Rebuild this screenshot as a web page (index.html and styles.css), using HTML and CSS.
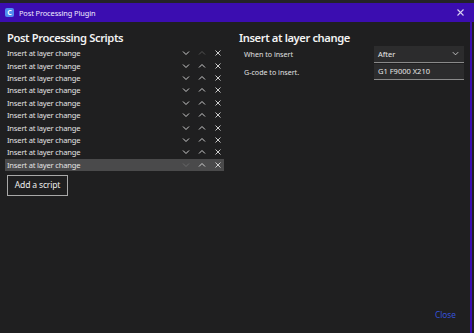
FILE: index.html
```html
<!DOCTYPE html>
<html>
<head>
<meta charset="utf-8">
<link rel="stylesheet" href="styles.css">
</head>
<body>
<div class="window">
  <div class="topstrip"></div>
  <div class="titlebar">
    <span class="appicon">C</span>
    <span class="title">Post Processing Plugin</span>
    <svg class="winclose" width="9" height="9" viewBox="0 0 9 9"><path d="M1.5 1.5L7.5 7.5M7.5 1.5L1.5 7.5" stroke="#d8d0f0" stroke-width="1.1"/></svg>
  </div>
  <div class="body">
    <div class="content">
      <div class="left">
        <h1 class="heading">Post Processing Scripts</h1>
        <div class="list">
          <div class="row"><span class="name">Insert at layer change</span><span class="icons"><svg class="ic" viewBox="0 0 10 10"><path d="M2 3.5L5 6.5L8 3.5"/></svg><svg class="ic dim" viewBox="0 0 10 10"><path d="M2 6.5L5 3.5L8 6.5"/></svg><svg class="ic" viewBox="0 0 10 10"><path d="M2.5 2.5L7.5 7.5M7.5 2.5L2.5 7.5"/></svg></span></div>
          <div class="row"><span class="name">Insert at layer change</span><span class="icons"><svg class="ic" viewBox="0 0 10 10"><path d="M2 3.5L5 6.5L8 3.5"/></svg><svg class="ic" viewBox="0 0 10 10"><path d="M2 6.5L5 3.5L8 6.5"/></svg><svg class="ic" viewBox="0 0 10 10"><path d="M2.5 2.5L7.5 7.5M7.5 2.5L2.5 7.5"/></svg></span></div>
          <div class="row"><span class="name">Insert at layer change</span><span class="icons"><svg class="ic" viewBox="0 0 10 10"><path d="M2 3.5L5 6.5L8 3.5"/></svg><svg class="ic" viewBox="0 0 10 10"><path d="M2 6.5L5 3.5L8 6.5"/></svg><svg class="ic" viewBox="0 0 10 10"><path d="M2.5 2.5L7.5 7.5M7.5 2.5L2.5 7.5"/></svg></span></div>
          <div class="row"><span class="name">Insert at layer change</span><span class="icons"><svg class="ic" viewBox="0 0 10 10"><path d="M2 3.5L5 6.5L8 3.5"/></svg><svg class="ic" viewBox="0 0 10 10"><path d="M2 6.5L5 3.5L8 6.5"/></svg><svg class="ic" viewBox="0 0 10 10"><path d="M2.5 2.5L7.5 7.5M7.5 2.5L2.5 7.5"/></svg></span></div>
          <div class="row"><span class="name">Insert at layer change</span><span class="icons"><svg class="ic" viewBox="0 0 10 10"><path d="M2 3.5L5 6.5L8 3.5"/></svg><svg class="ic" viewBox="0 0 10 10"><path d="M2 6.5L5 3.5L8 6.5"/></svg><svg class="ic" viewBox="0 0 10 10"><path d="M2.5 2.5L7.5 7.5M7.5 2.5L2.5 7.5"/></svg></span></div>
          <div class="row"><span class="name">Insert at layer change</span><span class="icons"><svg class="ic" viewBox="0 0 10 10"><path d="M2 3.5L5 6.5L8 3.5"/></svg><svg class="ic" viewBox="0 0 10 10"><path d="M2 6.5L5 3.5L8 6.5"/></svg><svg class="ic" viewBox="0 0 10 10"><path d="M2.5 2.5L7.5 7.5M7.5 2.5L2.5 7.5"/></svg></span></div>
          <div class="row"><span class="name">Insert at layer change</span><span class="icons"><svg class="ic" viewBox="0 0 10 10"><path d="M2 3.5L5 6.5L8 3.5"/></svg><svg class="ic" viewBox="0 0 10 10"><path d="M2 6.5L5 3.5L8 6.5"/></svg><svg class="ic" viewBox="0 0 10 10"><path d="M2.5 2.5L7.5 7.5M7.5 2.5L2.5 7.5"/></svg></span></div>
          <div class="row"><span class="name">Insert at layer change</span><span class="icons"><svg class="ic" viewBox="0 0 10 10"><path d="M2 3.5L5 6.5L8 3.5"/></svg><svg class="ic" viewBox="0 0 10 10"><path d="M2 6.5L5 3.5L8 6.5"/></svg><svg class="ic" viewBox="0 0 10 10"><path d="M2.5 2.5L7.5 7.5M7.5 2.5L2.5 7.5"/></svg></span></div>
          <div class="row"><span class="name">Insert at layer change</span><span class="icons"><svg class="ic" viewBox="0 0 10 10"><path d="M2 3.5L5 6.5L8 3.5"/></svg><svg class="ic" viewBox="0 0 10 10"><path d="M2 6.5L5 3.5L8 6.5"/></svg><svg class="ic" viewBox="0 0 10 10"><path d="M2.5 2.5L7.5 7.5M7.5 2.5L2.5 7.5"/></svg></span></div>
          <div class="row selected"><span class="name">Insert at layer change</span><span class="icons"><svg class="ic dim" viewBox="0 0 10 10"><path d="M2 3.5L5 6.5L8 3.5"/></svg><svg class="ic" viewBox="0 0 10 10"><path d="M2 6.5L5 3.5L8 6.5"/></svg><svg class="ic" viewBox="0 0 10 10"><path d="M2.5 2.5L7.5 7.5M7.5 2.5L2.5 7.5"/></svg></span></div>
        </div>
        <button class="addbtn">Add a script</button>
      </div>
      <div class="right">
        <h2 class="subheading">Insert at layer change</h2>
        <div class="field">
          <span class="label">When to insert</span>
          <div class="select"><span>After</span><svg class="selchev" viewBox="0 0 10 10"><path d="M2 3.5L5 6.5L8 3.5"/></svg></div>
        </div>
        <div class="field">
          <span class="label">G-code to insert.</span>
          <div class="input">G1 F9000 X210</div>
        </div>
      </div>
    </div>
    <div class="footer"><span class="close">Close</span></div>
  </div>
</div>
</body>
</html>
```
FILE: styles.css
```css
* { box-sizing: border-box; }
html, body { margin: 0; padding: 0; }
body {
  width: 474px;
  height: 333px;
  background: #1f1f20;
  font-family: "Noto Sans", "Open Sans", sans-serif;
  color: #e6e6e6;
  overflow: hidden;
}
.window {
  display: flex;
  flex-direction: column;
  height: 333px;
}
.topstrip {
  height: 3px;
  background: #242328;
}
.titlebar {
  height: 19px;
  background: #3b0db0;
  display: flex;
  align-items: center;
  padding: 0 9px 0 5px;
}
.appicon {
  width: 9px;
  height: 9px;
  background: #4f8cf0;
  border-radius: 2px;
  color: #fff;
  font-size: 7px;
  font-weight: 700;
  line-height: 9px;
  text-align: center;
}
.title {
  margin-left: 5px;
  font-size: 7.4px;
  letter-spacing: -0.1px;
  color: #f0ecff;
  flex: 1;
}
.winclose { display: block; }
.body {
  flex: 1;
  display: flex;
  flex-direction: column;
  border-right: 2px solid #3b0db0;
  margin-right: 2px;
}
.content {
  flex: 1;
  display: flex;
  padding: 7px 0 0 5px;
}
.left {
  width: 219px;
  display: flex;
  flex-direction: column;
}
.heading {
  margin: 0 0 0 2px;
  font-size: 11.2px;
  letter-spacing: -0.4px;
  font-weight: 600;
  line-height: 18px;
  color: #f2f2f2;
}
.list {
  display: flex;
  flex-direction: column;
}
.row {
  height: 12.4px;
  display: flex;
  align-items: center;
  padding-left: 2px;
}
.row.selected { background: #4a4a4b; }
.name {
  flex: 1;
  font-size: 7.6px;
  letter-spacing: -0.2px;
  color: #e2e2e2;
  white-space: nowrap;
}
.icons {
  display: flex;
  gap: 6px;
  padding-right: 1px;
}
.ic {
  width: 10px;
  height: 10px;
  fill: none;
  stroke: #d6d6d6;
  stroke-width: 0.95;
}
.ic.dim { stroke: #555; }
.row.selected .ic.dim { stroke: #6a6a6a; }
.addbtn {
  align-self: flex-start;
  margin: 4px 0 0 2px;
  width: 61px;
  height: 21px;
  background: transparent;
  border: 1px solid #a8a8a8;
  color: #ececec;
  font-family: inherit;
  font-size: 8.6px;
  letter-spacing: -0.2px;
  padding: 0;
}
.right {
  margin-left: 15px;
  width: 225px;
  display: flex;
  flex-direction: column;
}
.subheading {
  margin: 1px 0 0 0;
  font-size: 11.2px;
  letter-spacing: -0.4px;
  font-weight: 600;
  line-height: 15px;
  color: #f2f2f2;
}
.field {
  display: flex;
  align-items: center;
  margin-top: 1px;
}
.label {
  flex: 1;
  padding-left: 5px;
  font-size: 7.1px;
  color: #e0e0e0;
}
.select, .input {
  width: 90px;
  height: 16.5px;
  background: #2c2c2d;
  border-bottom: 1px solid #8a8a8a;
  display: flex;
  align-items: center;
  padding: 0 4px;
  font-size: 7.5px;
  color: #e8e8e8;
}
.select span { flex: 1; }
.selchev {
  width: 9px;
  height: 9px;
  fill: none;
  stroke: #d6d6d6;
  stroke-width: 0.95;
}
.footer {
  display: flex;
  justify-content: flex-end;
  padding: 0 14px 13px 0;
}
.close {
  font-size: 8.3px;
  color: #3552d8;
}
```
